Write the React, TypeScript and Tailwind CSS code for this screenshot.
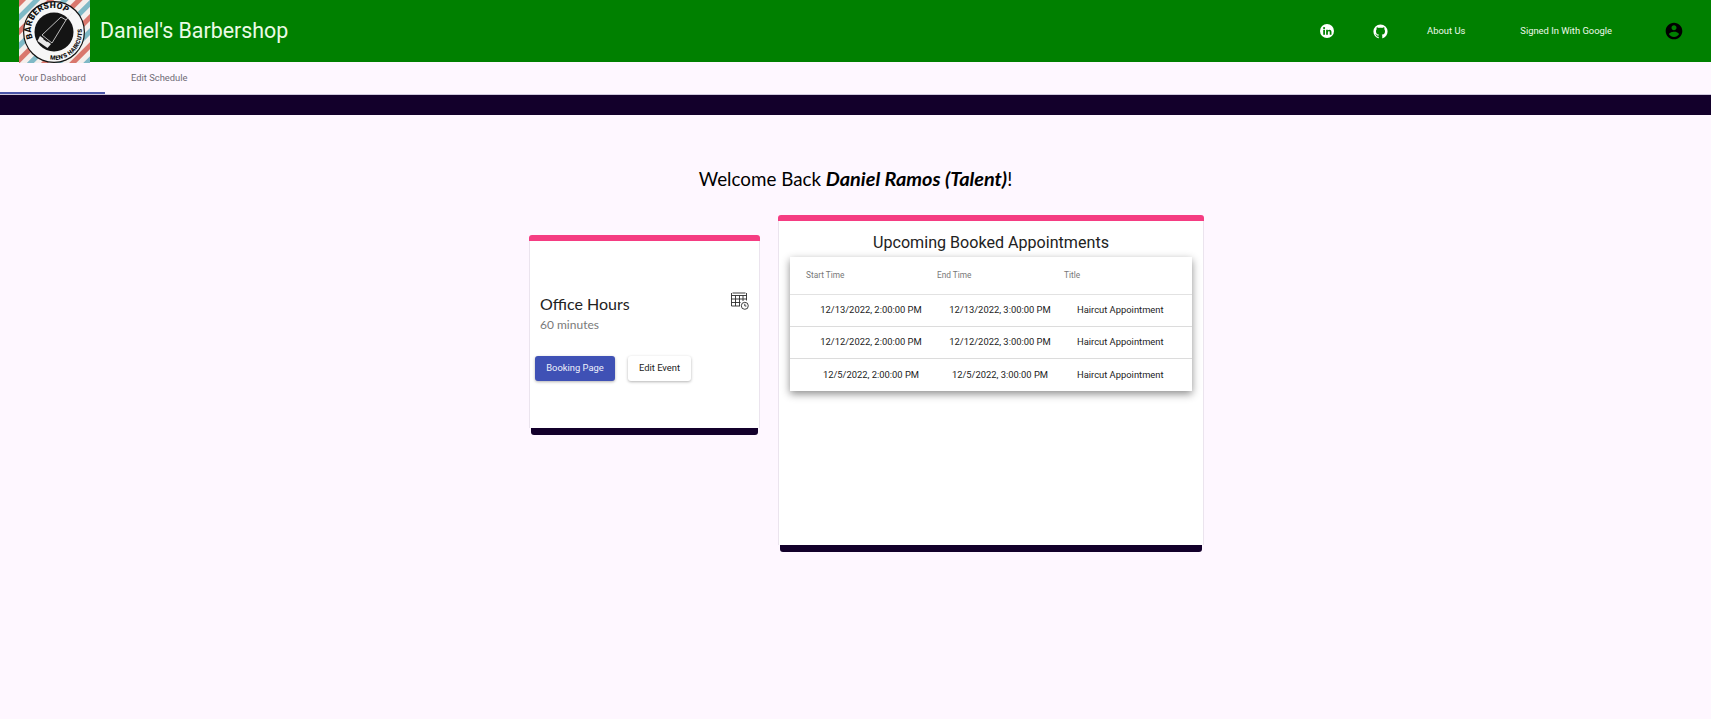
const ROBOTO = "font-['Roboto',sans-serif]";
const LATO = "font-['Lato',sans-serif]";

function BarberLogo() {
  return (
    <svg viewBox="0 0 71 63" className="block w-[71px] h-[63px] shrink-0">
      <defs>
        <pattern id="stripes" width="20" height="20" patternUnits="userSpaceOnUse" patternTransform="rotate(45)">
          <rect width="20" height="20" fill="#f4efec" />
          <rect x="0" width="5" height="20" fill="#d9776d" />
          <rect x="10" width="5" height="20" fill="#7fb9c6" />
        </pattern>
        <path id="topArc" d="M 14 38 A 21.5 21.5 0 0 1 53.6 21" />
        <path id="bottomArc" d="M 31 59.5 A 27.5 27.5 0 0 0 62 25" />
      </defs>
      <rect width="71" height="63" fill="url(#stripes)" />
      <circle cx="35" cy="32" r="31" fill="#111" />
      <circle cx="35" cy="32" r="29.8" fill="#f7f7f7" />
      <circle cx="35" cy="32" r="19.5" fill="#141414" />
      <text fontFamily="Roboto, sans-serif" fontSize="8.5" fontWeight="900" fill="#111" letterSpacing="0.2">
        <textPath href="#topArc">BARBERSHOP</textPath>
      </text>
      <text fontFamily="Roboto, sans-serif" fontSize="6" fontWeight="900" fill="#111" letterSpacing="0.2">
        <textPath href="#bottomArc">MEN'S HAIRCUTS</textPath>
      </text>
      <path d="M23 35 L42 17 L47 20 L33 43 Z" fill="none" stroke="#e8e8e8" strokeWidth="0.8" />
      <path d="M47 20 L53 13" fill="none" stroke="#e8e8e8" strokeWidth="0.8" />
      <path d="M21 36 L32 44 L28.5 48 L18.5 41 Z" fill="#e8e8e8" />
      <path d="M24.5 38.5 L28.5 41.5" stroke="#141414" strokeWidth="1.4" />
    </svg>
  );
}

function LinkedinBadge() {
  return (
    <svg viewBox="0 0 24 24" className="w-[14px] h-[14px]">
      <circle cx="12" cy="12" r="12" fill="#fff" />
      <g fill="#008000">
        <rect x="5.5" y="10" width="3" height="8.5" />
        <circle cx="7" cy="7" r="1.8" />
        <path d="M10.5 10h2.9v1.3c.6-1 1.7-1.5 2.9-1.5 2.6 0 3.4 1.6 3.4 4.1v4.6h-3v-4.1c0-1.2-.3-2-1.4-2-1.2 0-1.8.8-1.8 2.1v4h-3z" />
      </g>
    </svg>
  );
}

function GithubRing() {
  return (
    <svg viewBox="0 0 24 24" className="w-[17px] h-[17px]" fill="#fff">
      <path d="M12,2A10,10 0 0,0 2,12C2,16.42 4.87,20.17 8.84,21.5C9.34,21.58 9.5,21.27 9.5,21C9.5,20.77 9.5,20.14 9.5,19.31C6.73,19.91 6.14,17.97 6.14,17.97C5.68,16.81 5.03,16.5 5.03,16.5C4.12,15.88 5.1,15.9 5.1,15.9C6.1,15.97 6.63,16.93 6.63,16.93C7.5,18.45 8.97,18 9.54,17.76C9.63,17.11 9.89,16.67 10.17,16.42C7.95,16.17 5.62,15.31 5.62,11.5C5.62,10.39 6,9.5 6.65,8.79C6.55,8.54 6.2,7.5 6.75,6.15C6.75,6.15 7.59,5.88 9.5,7.17C10.29,6.95 11.15,6.84 12,6.84C12.85,6.84 13.71,6.95 14.5,7.17C16.41,5.88 17.25,6.15 17.25,6.15C17.8,7.5 17.45,8.54 17.35,8.79C18,9.5 18.38,10.39 18.38,11.5C18.38,15.32 16.04,16.16 13.81,16.41C14.17,16.72 14.5,17.33 14.5,18.26C14.5,19.6 14.5,20.68 14.5,21C14.5,21.27 14.66,21.59 15.17,21.5C19.14,20.16 22,16.42 22,12A10,10 0 0,0 12,2Z" />
    </svg>
  );
}

function AccountIcon() {
  return (
    <svg viewBox="0 0 24 24" className="w-[20px] h-[20px]" fill="#000">
      <path d="M12 2C6.48 2 2 6.48 2 12s4.48 10 10 10 10-4.48 10-10S17.52 2 12 2zm0 3c1.66 0 3 1.34 3 3s-1.34 3-3 3-3-1.34-3-3 1.34-3 3-3zm0 14.2c-2.5 0-4.71-1.28-6-3.22.03-1.99 4-3.08 6-3.08 1.99 0 5.97 1.09 6 3.08-1.29 1.94-3.5 3.22-6 3.22z" />
    </svg>
  );
}

function CalendarClockIcon() {
  return (
    <svg viewBox="0 0 18 18" className="w-[18px] h-[18px]" fill="none" stroke="#2b2b2b" strokeWidth="0.9">
      <path d="M1.5 1h13M0.5 3.5h15M0.5 1v13h8.5M15.5 1v7.5" />
      <path d="M0.5 7h15M0.5 10.5h9M4.5 3.5v10.5M8.5 3.5v10.5M12 3.5v5.5" />
      <circle cx="13.8" cy="13.8" r="3.5" fill="#fff" />
      <path d="M13.8 11.8v2.2h1.6" />
    </svg>
  );
}

const rows = [
  ["12/13/2022, 2:00:00 PM", "12/13/2022, 3:00:00 PM"],
  ["12/12/2022, 2:00:00 PM", "12/12/2022, 3:00:00 PM"],
  ["12/5/2022, 2:00:00 PM", "12/5/2022, 3:00:00 PM"],
];

function CardBars({ children, className }: { children: React.ReactNode; className: string }) {
  return (
    <div className={`flex flex-col ${className}`}>
      <div className="h-[6px] bg-[#f53d82] rounded-t-[3px] shrink-0" />
      <div className="flex-1 bg-white border-x border-[#ebe4ee] min-h-0">{children}</div>
      <div className="h-[7px] mx-[2px] bg-[#13002b] rounded-b-[3px] shrink-0" />
    </div>
  );
}

export default function App() {
  return (
    <div className={`min-h-[719px] bg-[#fef7ff] ${ROBOTO}`}>
      <header className="h-[62px] bg-[#008000] flex items-center">
        <div className="ml-[19px] self-start">
          <BarberLogo />
        </div>
        <h1 className="ml-[10px] text-[21.4px] text-[#eafbe6] leading-none">Daniel's Barbershop</h1>
        <div className="ml-auto flex items-center text-[9.4px] text-[#eef9ea]">
          <LinkedinBadge />
          <div className="ml-[38px]">
            <GithubRing />
          </div>
          <span className="ml-[38px]">About Us</span>
          <span className="ml-[55px]">Signed In With Google</span>
          <div className="ml-[52px] mr-[27px]">
            <AccountIcon />
          </div>
        </div>
      </header>

      <nav className="h-[33px] flex text-[9.4px] text-[#6f6b75] border-b border-[#cfc8dc]">
        <div className="w-[105px] pl-[19px] pt-[9px] border-b-2 border-[#4a55a8]">Your Dashboard</div>
        <div className="pl-[26px] pt-[9px]">Edit Schedule</div>
      </nav>
      <div className="h-[20px] bg-[#13002b]" />

      <main className="flex flex-col items-center">
        <h2 className={`mt-[49px] h-[29px] text-[18.8px] leading-[28px] text-black ${LATO}`}>
          Welcome Back <b className="italic font-bold text-[19.9px]">Daniel Ramos (Talent)</b>!
        </h2>
        <div className="mt-[22px] flex items-start gap-[18px] ml-[22px]">
          <CardBars className="mt-[20px] w-[231px] h-[200px]">
            <div className={`relative pt-[51px] pl-[10px] ${LATO}`}>
              <div className="text-[16px] leading-[24px] text-[#222]">Office Hours</div>
              <div className="text-[12px] leading-[17px] text-[#7a7a7a]">60 minutes</div>
              <div className="absolute right-[10px] top-[51px]">
                <CalendarClockIcon />
              </div>
            </div>
            <div className={`mt-[23px] ml-[5px] flex gap-[13px] text-[9.4px] ${ROBOTO}`}>
              <button className="w-[80px] h-[25px] rounded-[3px] bg-[#3f51b5] text-[#eef0fb] shadow-[0_1px_3px_rgba(0,0,0,0.3)]">
                Booking Page
              </button>
              <button className="w-[63px] h-[25px] rounded-[3px] bg-white text-[#222] shadow-[0_1px_3px_rgba(0,0,0,0.3)]">
                Edit Event
              </button>
            </div>
          </CardBars>

          <CardBars className="w-[426px] h-[337px]">
            <div className="text-center text-[16.1px] leading-[22px] text-[#222] pt-[11px]">
              Upcoming Booked Appointments
            </div>
            <div className="mt-[3px] mx-[11px] bg-white shadow-[0_3px_8px_rgba(0,0,0,0.45)]">
              <div className="h-[38px] flex items-center text-[8.3px] text-[#777] border-b border-[#e2e2e2]">
                <div className="w-[147px] pl-[16px]">Start Time</div>
                <div className="w-[127px]">End Time</div>
                <div>Title</div>
              </div>
              {rows.map((row, i) => (
                <div
                  key={row[0]}
                  className={`h-[32px] flex items-center text-[9.4px] text-[#222] ${i < 2 ? "border-b border-[#dcdcdc]" : ""}`}
                >
                  <div className="w-[158px] pl-[4px] text-center whitespace-nowrap">{row[0]}</div>
                  <div className="w-[104px] text-center whitespace-nowrap">{row[1]}</div>
                  <div className="pl-[25px] whitespace-nowrap">Haircut Appointment</div>
                </div>
              ))}
            </div>
          </CardBars>
        </div>
      </main>
    </div>
  );
}
